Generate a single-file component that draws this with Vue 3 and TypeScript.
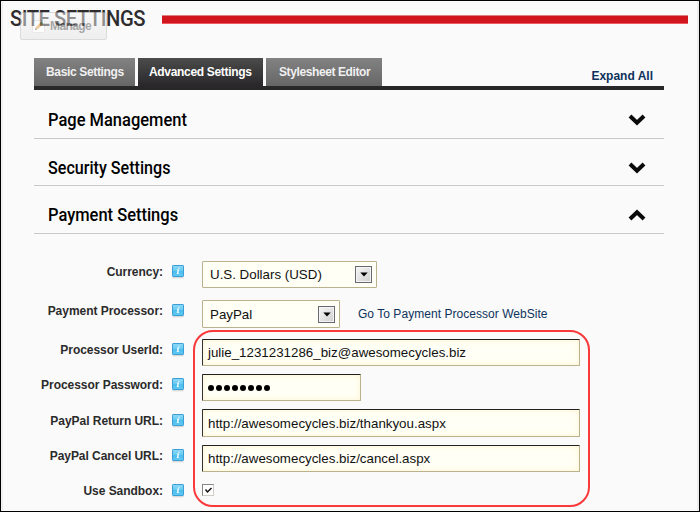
<script setup lang="ts">
interface Tab { label: string; active: boolean; cls: string }
interface Section { title: string; open: boolean; cls: string }
interface Field {
  key: string
  label: string
  kind: 'select' | 'text' | 'password' | 'checkbox'
  value: string
}

const tabs: Tab[] = [
  { label: 'Basic Settings', active: false, cls: 'basic' },
  { label: 'Advanced Settings', active: true, cls: 'advanced' },
  { label: 'Stylesheet Editor', active: false, cls: 'stylesheet' },
]

const sections: Section[] = [
  { title: 'Page Management', open: false, cls: 'page-mgmt' },
  { title: 'Security Settings', open: false, cls: 'security' },
  { title: 'Payment Settings', open: true, cls: 'payment' },
]

const fields: Field[] = [
  { key: 'currency', label: 'Currency:', kind: 'select', value: 'U.S. Dollars (USD)' },
  { key: 'processor', label: 'Payment Processor:', kind: 'select', value: 'PayPal' },
  { key: 'userid', label: 'Processor UserId:', kind: 'text', value: 'julie_1231231286_biz@awesomecycles.biz' },
  { key: 'password', label: 'Processor Password:', kind: 'password', value: '' },
  { key: 'return', label: 'PayPal Return URL:', kind: 'text', value: 'http://awesomecycles.biz/thankyou.aspx' },
  { key: 'cancel', label: 'PayPal Cancel URL:', kind: 'text', value: 'http://awesomecycles.biz/cancel.aspx' },
  { key: 'sandbox', label: 'Use Sandbox:', kind: 'checkbox', value: '' },
]
</script>

<template>
  <main class="page">
    <header class="header">
      <h1 class="title">SITE SETTINGS</h1>
      <div class="rule"></div>
      <div class="manage">
        <svg class="pencil" width="13" height="13" viewBox="0 0 13 13">
          <rect x=".5" y=".5" width="12" height="12" rx="1" fill="#fff" stroke="#d8d8d8" />
          <path d="M3 10l1-3 5-5 2 2-5 5z" fill="#dfa24c" />
          <path d="M8 3l1.500-1.500 2 2L10 5z" fill="#7fa65c" />
          <path d="M3 10l.6-1.900L5 9.400z" fill="#555" />
        </svg>
        <span>Manage</span>
      </div>
    </header>

    <nav class="tabs">
      <div v-for="t in tabs" :key="t.label" class="tab" :class="[t.cls, { active: t.active }]">
        <span>{{ t.label }}</span>
      </div>
      <a class="expand">Expand All</a>
    </nav>

    <section v-for="s in sections" :key="s.title" class="section" :class="s.cls">
      <h2>{{ s.title }}</h2>
      <svg width="20" height="14" viewBox="0 0 20 14">
        <path :d="s.open ? 'M3 11L10 4.200L17 11' : 'M3 3L10 9.800L17 3'" fill="none" stroke="#0a0a0a" stroke-width="4" />
      </svg>
    </section>

    <div class="form">
      <div v-for="f in fields" :key="f.key" class="row" :class="f.key">
        <span class="label">{{ f.label }}</span>
        <svg class="info" width="14" height="15" viewBox="0 0 14 15">
          <defs>
            <linearGradient id="infoFill" x1="0" y1="0" x2="0" y2="1">
              <stop offset="0" stop-color="#8fd8f6" />
              <stop offset=".45" stop-color="#6accf3" />
              <stop offset=".5" stop-color="#4bbcec" />
              <stop offset="1" stop-color="#62c9f3" />
            </linearGradient>
          </defs>
          <rect x="1.500" y="13" width="11" height="1.300" fill="#000" opacity=".13" />
          <rect x="1.500" y="1.500" width="11" height="11" rx=".6" fill="url(#infoFill)" stroke="#3a9fd6" />
          <path d="M7.500 3.700h1.300l-.3 1.100H7.200zM6.100 5.600h2.100L7.400 9.200h.8l-.2.800H5.700l.8-3.600h-.6z" fill="#fff" opacity=".9" />
        </svg>
        <div v-if="f.kind === 'select'" class="select">
          <span>{{ f.value }}</span>
          <div class="drop">
            <svg width="8" height="5" viewBox="0 0 8 5"><path d="M.3.5h7.400L4 4.500z" fill="#000" /></svg>
          </div>
        </div>
        <div v-else-if="f.kind === 'text'" class="input"><span>{{ f.value }}</span></div>
        <div v-else-if="f.kind === 'password'" class="input short">
          <i v-for="n in 8" :key="n" class="dot"></i>
        </div>
        <div v-else class="check">
          <svg width="9" height="9" viewBox="0 0 9 9"><path d="M1.500 3.600L3.500 6L7.500 2" fill="none" stroke="#111" stroke-width="1.500" /></svg>
        </div>
        <a v-if="f.key === 'processor'" class="goto">Go To Payment Processor WebSite</a>
      </div>
      <div class="highlight"></div>
    </div>
  </main>
</template>

<style>
body { margin: 0; }
</style>

<style scoped>
* { box-sizing: border-box; }
.page {
  width: 700px;
  height: 512px;
  border: 1px solid #000;
  background: #fafafa;
  box-shadow: inset 2px 0 #f1eff0, inset -2px 0 #ececec;
  font-family: "Liberation Sans", sans-serif;
  overflow: hidden;
}
.header {
  position: relative;
  display: flex;
  height: 57px;
  padding-left: 9px;
}
.title {
  margin: 5px 0 0;
  width: 152px;
  font: 500 21.500px/26px Roboto, sans-serif;
  letter-spacing: -0.500px;
  color: #2e2c2e;
  white-space: nowrap;
  transform: scaleX(.94);
  transform-origin: left;
}
.rule {
  width: 526px;
  height: 9px;
  margin-top: 14px;
  background: #d0161c;
  border-top: 1px solid #e07f82;
  border-bottom: 1px solid #ee5a62;
}
.manage {
  position: absolute;
  left: 19px;
  top: 11px;
  width: 87px;
  height: 28px;
  display: flex;
  align-items: center;
  gap: 5px;
  padding-left: 11px;
  border: 1px solid #bdbdbd;
  border-radius: 2px;
  background: linear-gradient(#f6f6f6, #e4e4e4);
  opacity: .5;
  font-weight: bold;
  font-size: 12px;
  letter-spacing: -0.600px;
  color: #555;
}
.tabs {
  display: flex;
  gap: 3px;
  width: 630px;
  height: 32px;
  margin-left: 33px;
  border-bottom: 4px solid #29272a;
}
.tab {
  height: 28px;
  padding-left: 12px;
  font: bold 12px/28px "Liberation Sans", sans-serif;
  color: #f0f0f0;
  background: linear-gradient(#828282, #666);
  white-space: nowrap;
}
.tab.active { background: linear-gradient(#4c4c4c, #29272a); color: #fff; }
.tab.basic { width: 101px; letter-spacing: -0.350px; }
.tab.advanced { width: 125px; padding-left: 11px; letter-spacing: -0.320px; }
.tab.stylesheet { width: 116px; padding-left: 13px; letter-spacing: -0.400px; }
.expand {
  margin: 9px 11px 0 auto;
  font: bold 12px/18px "Liberation Sans", sans-serif;
  color: #0d335c;
}
.section {
  display: flex;
  align-items: center;
  justify-content: space-between;
  width: 630px;
  height: 48px;
  margin-left: 33px;
  padding: 11px 17px 0 14px;
  border-bottom: 1px solid #c9c9c9;
}
.section h2 {
  margin: 0;
  font: 500 18px/26px Roboto, sans-serif;
  color: #000;
  transform: scaleX(.915);
  transform-origin: left;
}
.page-mgmt { height: 49px; }
.security { height: 47px; }
.security h2 { transform: scaleX(.895); }
.form {
  position: relative;
  padding: 27px 0 0 33px;
}
.row { display: flex; height: 39px; }
.row.password, .row.userid, .row.cancel { height: 35px; }
.row.return { height: 36px; }
.label {
  width: 129px;
  padding-top: 1px;
  text-align: right;
  font: bold 12px/20px "Liberation Sans", sans-serif;
  letter-spacing: -0.040px;
  color: #2b2b2b;
  white-space: nowrap;
}
.info { margin: 3px 17px 0 8px; flex: none; }
.return .label { padding-top: 2px; }
.return .info { margin-top: 4px; }
.input, .select {
  display: flex;
  align-items: center;
  width: 378px;
  height: 27px;
  padding-left: 5px;
  border: 1px solid #bab28c;
  border-top-color: #222;
  border-left-color: #333;
  border-radius: 1px;
  background: #fffff5;
  box-shadow: inset 0 0 5px 1px #fff6d8;
  font-size: 13.330px;
  color: #111;
  white-space: nowrap;
}
.select {
  justify-content: space-between;
  width: 175px;
  padding: 0 4px 0 7px;
  border-color: #bab28c;
  box-shadow: none;
}
.processor .select { width: 138px; height: 28px; }
.return .input { height: 28px; }
.short { width: 159px; gap: 2px; }
.dot { width: 6px; height: 6px; border-radius: 50%; background: #000; }
.drop {
  display: flex;
  align-items: center;
  justify-content: center;
  width: 17px;
  height: 17px;
  border: 1px solid #666a70;
  background: linear-gradient(135deg, #f6f6f6, #cfcfcf);
  box-shadow: inset 0 0 0 1px #f4f4f4;
}
.goto {
  margin: 4px 0 0 18px;
  font-size: 12px;
  line-height: 20px;
  letter-spacing: .040px;
  color: #0d335c;
  white-space: nowrap;
}
.check {
  display: flex;
  align-items: center;
  justify-content: center;
  width: 12px;
  height: 12px;
  margin-top: 4px;
  border: 1px solid #d0cdc5;
  border-top-color: #858585;
  border-left-color: #858585;
  background: #fff;
}
.highlight {
  position: absolute;
  left: 192px;
  top: 96px;
  width: 397px;
  height: 177px;
  border: 2px solid #fb383a;
  border-radius: 20px;
}
</style>
